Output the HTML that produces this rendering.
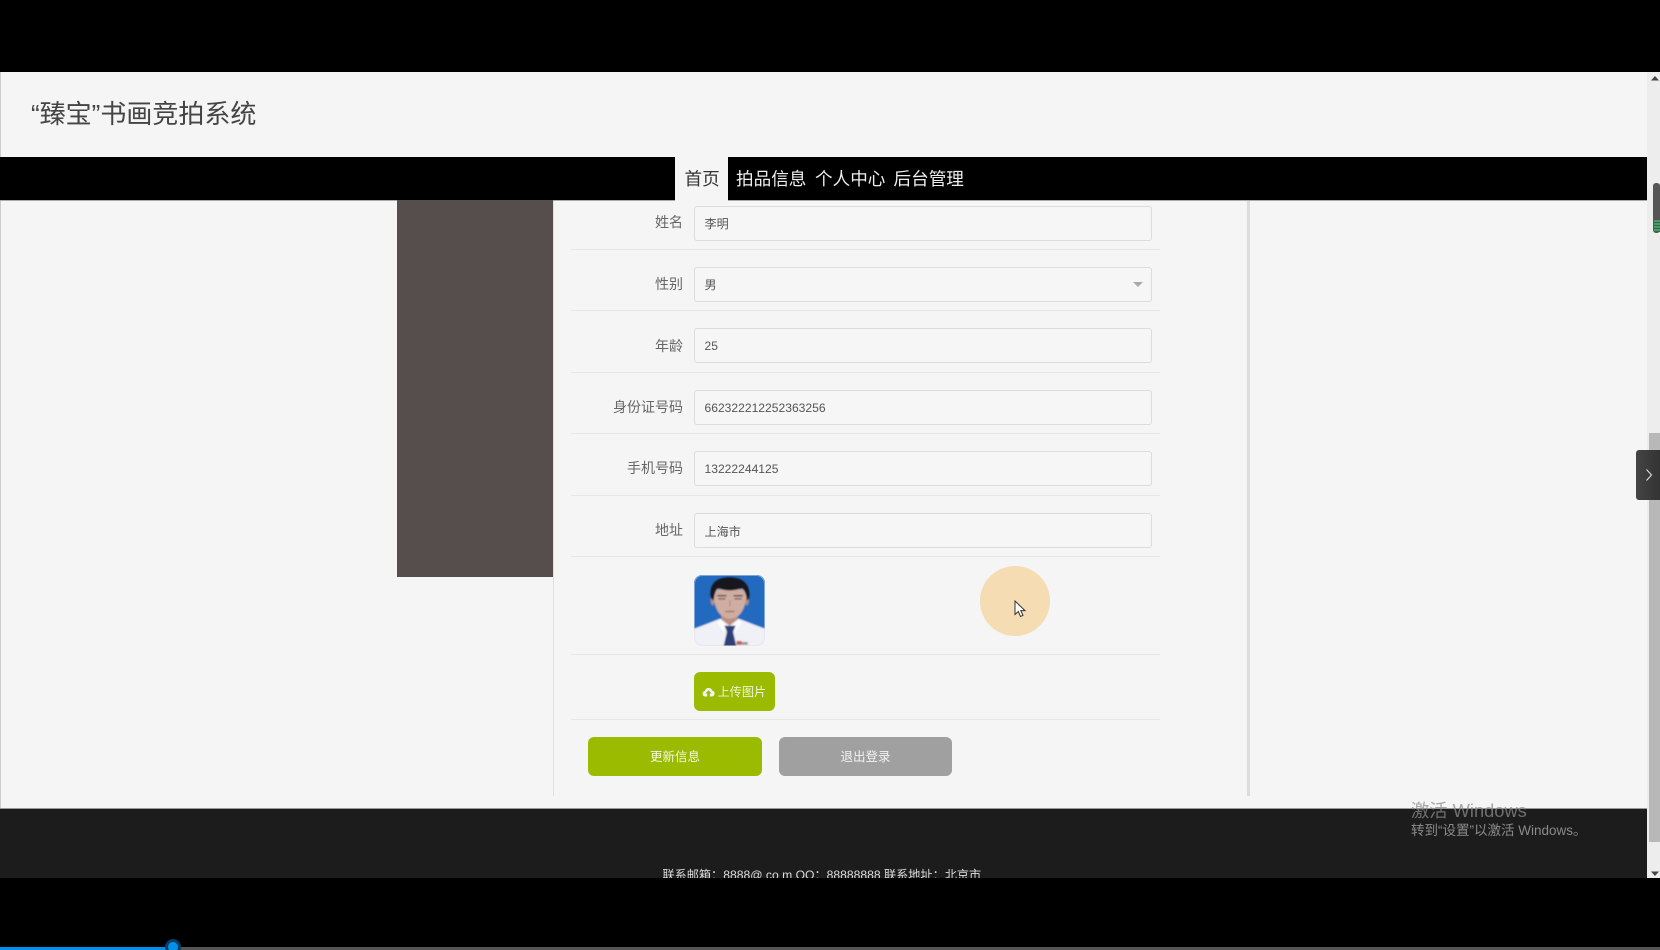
<!DOCTYPE html>
<html lang="zh"><head><meta charset="utf-8"><title>“臻宝”书画竞拍系统</title>
<style>
*{box-sizing:border-box}
html,body{margin:0;padding:0;width:1660px;height:950px;overflow:hidden;background:#000}
body{position:relative;font-family:"Liberation Sans","Noto Sans CJK SC",sans-serif}
.a{position:absolute}
.t{position:absolute;white-space:nowrap;line-height:1;filter:blur(.3px)}
.lb{position:absolute;white-space:nowrap;font-size:14px;color:#666;right:977px;line-height:20px;filter:blur(.3px)}
.in{position:absolute;left:694px;width:458px;height:35px;background:#f6f6f6;border:1px solid #dcdcdc;border-radius:3px;font-size:12.1px;color:#555;padding-left:9.500px;line-height:34px;filter:blur(.25px)}
.hr{position:absolute;left:571px;width:589px;height:1px;background:#e6e6e6}
</style></head><body>
<div class="a" style="left:0;top:72px;width:1660px;height:806px;background:#f5f5f5;overflow:hidden">
  <div class="a" style="left:0;top:0;width:1px;height:736px;background:#ccc"></div>
  <div class="t" style="left:31px;top:29px;font-size:26px;color:#444">“臻宝”书画竞拍系统</div>
  <div class="a" style="left:0;top:85px;width:1647px;height:44px;background:#000;border-bottom:1px solid #aaa"></div>
  <div class="a" style="left:675px;top:85px;width:53px;height:45px;background:#f5f5f5"></div>
  <div class="t" style="left:684.500px;top:99px;font-size:17.600px;color:#333">首页</div>
  <div class="t" style="left:736px;top:99px;font-size:17.600px;color:#eee">拍品信息</div>
  <div class="t" style="left:815px;top:99px;font-size:17.600px;color:#eee">个人中心</div>
  <div class="t" style="left:893.500px;top:99px;font-size:17.600px;color:#eee">后台管理</div>
</div>
<div class="a" style="left:397px;top:200px;width:156px;height:377px;background:#564e4c"></div>
<div class="a" style="left:552.500px;top:201px;width:1.500px;height:595px;background:#e0e0e0"></div>
<div class="a" style="left:1247px;top:201px;width:2.500px;height:595px;background:#dcdcdc"></div>

<div class="lb" style="top:212px">姓名</div><div class="in" style="top:206px">李明</div><div class="hr" style="top:249px"></div>
<div class="lb" style="top:274px">性别</div><div class="in" style="top:267px">男<svg class="a" style="left:438px;top:14px" width="10" height="6"><path d="M0 0h10L5 5z" fill="#aaa"/></svg></div><div class="hr" style="top:310px"></div>
<div class="lb" style="top:336px">年龄</div><div class="in" style="top:328px">25</div><div class="hr" style="top:372px"></div>
<div class="lb" style="top:397px">身份证号码</div><div class="in" style="top:390px">662322212252363256</div><div class="hr" style="top:433px"></div>
<div class="lb" style="top:458px">手机号码</div><div class="in" style="top:451px">13222244125</div><div class="hr" style="top:495px"></div>
<div class="lb" style="top:520px">地址</div><div class="in" style="top:513px"><span style="position:relative;top:.5px">上海市</span></div><div class="hr" style="top:556px"></div>

<svg class="a" style="left:694px;top:575px;border-radius:8px" width="71" height="71" viewBox="0 0 70 70">
  <defs><filter id="b" x="-10%" y="-10%" width="120%" height="120%"><feGaussianBlur stdDeviation="0.8"/></filter></defs>
  <g filter="url(#b)">
  <rect x="-3" y="-3" width="76" height="76" fill="#206abf"/>
  <path d="M27 34H43V47L35 52 27 47z" fill="#b98f80"/>
  <path d="M-3 54 8 50 26 43 35 50 44 43 62 50 73 54V73H-3z" fill="#eff1f6"/>
  <path d="M26 44 34 52 29 56 23 47zM44 44 36 52 41 56 47 47z" fill="#fbfcfe"/>
  <ellipse cx="18.500" cy="25" rx="2" ry="5" fill="#b58c7e"/><ellipse cx="52" cy="25" rx="2" ry="5" fill="#b58c7e"/>
  <path d="M19 14C19 32 25 43 35.500 43S52 32 52 14z" fill="#cfaea1"/>
  <path d="M16 20C15 6 25 2 35 2S55 6 55 20C55 23 53 25 52 25 52 20 50 15 47 13 40 16 30 16 24 13 21 15 20 20 19.500 25 17 24 16 22 16 20z" fill="#15151b"/>
  <path d="M23 20.500h9M39 20.500h9" stroke="#4a3a38" stroke-width="1.300"/>
  <path d="M24 23.500h7M40 23.500h7" stroke="#6a5350" stroke-width="1.200"/>
  <path d="M35.500 25V31" stroke="#b89082" stroke-width="1.500"/>
  <path d="M31 36h9" stroke="#9c6a62" stroke-width="1.300"/>
  <path d="M30 50 41 50 38.500 56 42 71H29L32.500 56z" fill="#2d3f78"/>
  <path d="M42 65h5v4H42z" fill="#c65a50"/><path d="M47 66h6v3H47z" fill="#999"/>
  </g>
  <rect x=".5" y=".5" width="69" height="69" rx="8" fill="none" stroke="#dde" stroke-opacity=".5"/>
</svg>
<div class="hr" style="top:654px"></div>
<div class="a" style="left:980px;top:566px;width:70px;height:70px;border-radius:50%;background:#f5dcb3"></div>
<svg class="a" style="left:1014px;top:600px" width="13" height="18" viewBox="0 0 13 18"><path d="M1 1V14.500L4.300 11.500 6.500 16.500 9 15.400 6.800 10.600H11z" fill="#fff" stroke="#333" stroke-width="1"/></svg>

<div class="a" style="left:694px;top:672px;width:81px;height:39px;border-radius:6px;background:#9bbb00"></div>
<svg class="a" style="left:702px;top:686px" width="13" height="11" viewBox="0 0 13 11"><path d="M3 10.500A2.800 2.800 0 0 1 2.800 5 3.900 3.900 0 0 1 10.300 4.600 3 3 0 0 1 10 10.500H7.800V7.500H9.500L6.500 4.300 3.500 7.500H5.200V10.500z" fill="#f2f2f2"/></svg>
<div class="t" style="left:717.500px;top:686px;font-size:12.200px;color:#eef3d8">上传图片</div>
<div class="hr" style="top:719px"></div>

<div class="a" style="left:588px;top:737px;width:173.500px;height:39px;border-radius:6px;background:#9bbb00"></div>
<div class="t" style="left:650px;top:751px;font-size:12.500px;color:#f2f6e2">更新信息</div>
<div class="a" style="left:779px;top:737px;width:173px;height:39px;border-radius:6px;background:#a0a0a0"></div>
<div class="t" style="left:840.500px;top:751px;font-size:12.500px;color:#f2f2f2">退出登录</div>

<div class="a" style="left:0;top:808px;width:1647px;height:70px;background:#1c1c1c;border-top:1px solid #999;overflow:hidden">
  <div class="t" style="left:662.500px;top:60px;font-size:12.150px;color:#ddd">联系邮箱：8888@ co m QQ：88888888 联系地址：北京市</div>
</div>

<div class="a" style="left:1647px;top:72px;width:13px;height:806px;background:#ededed"></div>
<svg class="a" style="left:1651px;top:75px" width="8" height="6"><path d="M0 5.500 4 1 8 5.500z" fill="#444"/></svg>
<svg class="a" style="left:1651px;top:871px" width="8" height="6"><path d="M0 .500 4 5 8 .500z" fill="#444"/></svg>
<div class="a" style="left:1649px;top:433px;width:11px;height:409px;background:#b8b8b8"></div>
<div class="a" style="left:1653px;top:183px;width:7px;height:50px;border-radius:3px;background:#555"></div>
<div class="a" style="left:1654px;top:220px;width:6px;height:12px;background:repeating-linear-gradient(#4d9a66 0 2px,#2f6b48 2px 3px)"></div>
<div class="a" style="left:1636px;top:450px;width:24px;height:50px;border-radius:3px 0 0 3px;background:linear-gradient(90deg,#444,#333)"></div>
<svg class="a" style="left:1645px;top:468px" width="8" height="14"><path d="M1.500 1.500 6.500 7 1.500 12.500" fill="none" stroke="#e6e6e6" stroke-width="1"/></svg>

<div class="t" style="left:1411px;top:802px;font-size:18.300px;color:#8a8a8a;opacity:.75">激活 Windows</div>
<div class="t" style="left:1411px;top:824px;font-size:13.500px;color:#8a8a8a">转到“设置”以激活 Windows。</div>

<div class="a" style="left:0;top:947px;width:1660px;height:3px;background:#555"></div>
<div class="a" style="left:0;top:947px;width:173px;height:3px;background:#0091ea"></div>
<div class="a" style="left:165px;top:939px;width:16px;height:16px;border-radius:50%;background:#0091ea;border:3px solid #0b3d66"></div>
</body></html>
